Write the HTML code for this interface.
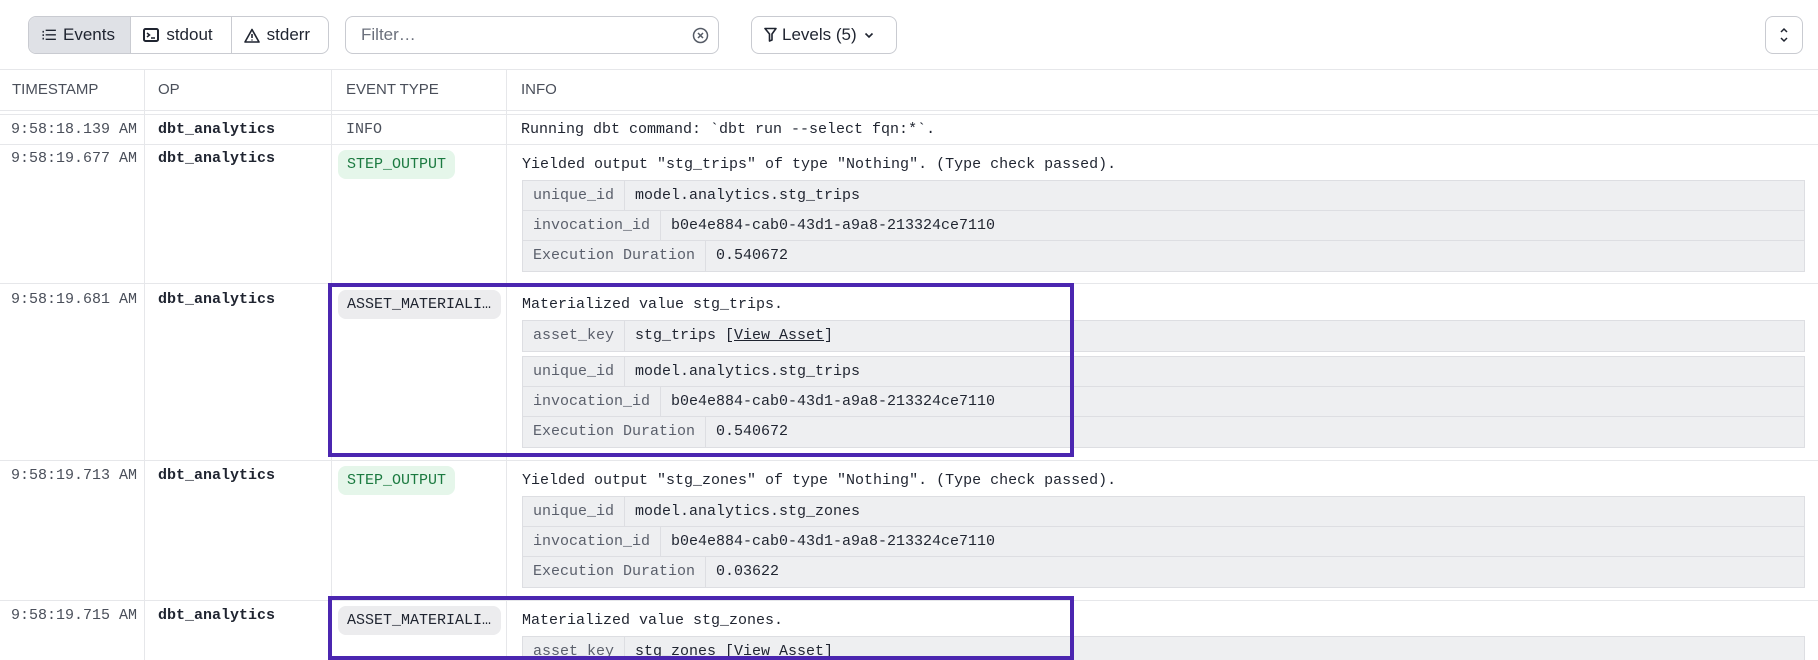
<!DOCTYPE html>
<html style="overflow:hidden;height:660px"><head><meta charset="utf-8"><style>
*{box-sizing:border-box;margin:0;padding:0}
body{width:1818px;height:660px;overflow:hidden;background:#fff;font-family:"Liberation Sans",sans-serif;color:#1f2430;position:relative}
.a{position:absolute}
.mono{font-family:"Liberation Mono",monospace;font-size:15px;white-space:nowrap}
.hl{height:1px;background:#e6e7ea;left:0;width:1818px}
.vl{width:1px;background:#e6e7ea}
.grp{left:28px;top:16px;width:301px;height:38px;border:1px solid #c9cbd1;border-radius:8px;overflow:hidden;display:flex;font-size:17px}
.grp div{display:flex;align-items:center;gap:7px;padding-left:12px;border-right:1px solid #c9cbd1;height:100%}
.pill{height:29px;border-radius:8px;padding:0 9px;line-height:29px}
.tbl{left:522px;width:1283px;background:#eeeff1;border:1px solid #dddee2}
.tr{height:30px;border-bottom:1px solid #dddee2;position:relative;line-height:29px}
.tr:last-child{border-bottom:none}
.k{position:absolute;left:0;top:0;height:100%;padding-left:10px;border-right:1px solid #dddee2;color:#5a5f6b}
.v{position:absolute;top:0}
.box{border:4px solid #4b26b0}
.ts{color:#4a4f5a}
.op{font-weight:bold}
.hd{top:81px;font-size:15px;color:#4a4f5a}
</style></head><body>
<div class="a grp">
<div style="width:103px;background:#dfe1e6"><span style="font-size:14px;letter-spacing:-1px">⁝☰</span>Events</div>
<div style="width:101px"><svg width="16" height="14" viewBox="0 0 16 14"><rect x="1" y="1" width="14" height="12" rx="1.5" fill="none" stroke="#1f2430" stroke-width="2"/><path d="M4 5l2.5 2L4 9M8 10h4" stroke="#1f2430" stroke-width="1.5" fill="none"/></svg>stdout</div>
<div style="width:97px;border-right:none"><svg width="16" height="15" viewBox="0 0 16 15"><path d="M8 1.5L15 14H1Z" fill="none" stroke="#1f2430" stroke-width="1.6" stroke-linejoin="round"/><path d="M8 6v4M8 11.5v1" stroke="#1f2430" stroke-width="1.6"/></svg>stderr</div>
</div>
<div class="a" style="left:345px;top:16px;width:374px;height:38px;border:1px solid #c9cbd1;border-radius:8px;font-size:17px;color:#6b707c;line-height:36px;padding-left:15px">Filter…
<svg class="a" style="right:9px;top:10px" width="17" height="17" viewBox="0 0 17 17"><circle cx="8.5" cy="8.5" r="7" fill="none" stroke="#555b66" stroke-width="1.5"/><path d="M6 6l5 5M11 6l-5 5" stroke="#555b66" stroke-width="1.5"/></svg></div>
<div class="a" style="left:751px;top:16px;width:146px;height:38px;border:1px solid #c9cbd1;border-radius:8px;font-size:17px;line-height:36px;padding-left:12px">
<svg style="vertical-align:-2px;margin-right:5px" width="13" height="15" viewBox="0 0 13 15"><path d="M1 1.5h11L8 7v6L5.5 14V7Z" fill="none" stroke="#1f2430" stroke-width="1.6" stroke-linejoin="round"/></svg>Levels (5) <svg style="vertical-align:1px;margin-left:3px" width="10" height="7" viewBox="0 0 10 7"><path d="M1.5 1.5L5 5l3.5-3.5" fill="none" stroke="#1f2430" stroke-width="1.6"/></svg></div>
<div class="a" style="left:1765px;top:16px;width:38px;height:38px;border:1px solid #c9cbd1;border-radius:8px">
<svg class="a" style="left:13px;top:10px" width="10" height="16" viewBox="0 0 10 16"><path d="M2 5l3-3 3 3M2 11l3 3 3-3" fill="none" stroke="#1f2430" stroke-width="1.5"/></svg></div>

<div class="a hl" style="top:69px"></div>
<div class="a hl" style="top:110px"></div>
<div class="a hl" style="top:114px"></div>
<div class="a hd" style="left:12px">TIMESTAMP</div>
<div class="a hd" style="left:158px">OP</div>
<div class="a hd" style="left:346px">EVENT TYPE</div>
<div class="a hd" style="left:521px">INFO</div>
<div class="a vl" style="left:144px;top:69px;height:591px"></div>
<div class="a vl" style="left:331px;top:69px;height:591px"></div>
<div class="a vl" style="left:506px;top:69px;height:591px"></div>

<div class="a hl" style="top:144px"></div>
<div class="a hl" style="top:283px"></div>
<div class="a hl" style="top:460px"></div>
<div class="a hl" style="top:600px"></div>

<div class="a mono ts" style="left:11px;top:121px">9:58:18.139 AM</div>
<div class="a mono op" style="left:158px;top:121px">dbt_analytics</div>
<div class="a mono ts" style="left:346px;top:121px">INFO</div>
<div class="a mono" style="left:521px;top:121px">Running dbt command: `dbt run --select fqn:*`.</div>

<div class="a mono ts" style="left:11px;top:150px">9:58:19.677 AM</div>
<div class="a mono op" style="left:158px;top:150px">dbt_analytics</div>
<div class="a mono pill" style="left:338px;top:150px;background:#e5f6ea;color:#1b7a40">STEP_OUTPUT</div>
<div class="a mono" style="left:522px;top:156px">Yielded output "stg_trips" of type "Nothing". (Type check passed).</div>
<div class="a tbl mono" style="top:180px">
<div class="tr"><div class="k" style="width:102px">unique_id</div><div class="v" style="left:112px">model.analytics.stg_trips</div></div>
<div class="tr"><div class="k" style="width:138px">invocation_id</div><div class="v" style="left:148px">b0e4e884-cab0-43d1-a9a8-213324ce7110</div></div>
<div class="tr"><div class="k" style="width:183px">Execution Duration</div><div class="v" style="left:193px">0.540672</div></div>
</div>

<div class="a mono ts" style="left:11px;top:291px">9:58:19.681 AM</div>
<div class="a mono op" style="left:158px;top:291px">dbt_analytics</div>
<div class="a mono pill" style="left:338px;top:290px;background:#ececee;width:163px">ASSET_MATERIALI…</div>
<div class="a mono" style="left:522px;top:296px">Materialized value stg_trips.</div>
<div class="a tbl mono" style="top:320px">
<div class="tr"><div class="k" style="width:102px">asset_key</div><div class="v" style="left:112px">stg_trips [<u>View Asset</u>]</div></div>
</div>
<div class="a tbl mono" style="top:356px">
<div class="tr"><div class="k" style="width:102px">unique_id</div><div class="v" style="left:112px">model.analytics.stg_trips</div></div>
<div class="tr"><div class="k" style="width:138px">invocation_id</div><div class="v" style="left:148px">b0e4e884-cab0-43d1-a9a8-213324ce7110</div></div>
<div class="tr"><div class="k" style="width:183px">Execution Duration</div><div class="v" style="left:193px">0.540672</div></div>
</div>
<div class="a box" style="left:328px;top:283px;width:746px;height:174px"></div>

<div class="a mono ts" style="left:11px;top:467px">9:58:19.713 AM</div>
<div class="a mono op" style="left:158px;top:467px">dbt_analytics</div>
<div class="a mono pill" style="left:338px;top:466px;background:#e5f6ea;color:#1b7a40">STEP_OUTPUT</div>
<div class="a mono" style="left:522px;top:472px">Yielded output "stg_zones" of type "Nothing". (Type check passed).</div>
<div class="a tbl mono" style="top:496px">
<div class="tr"><div class="k" style="width:102px">unique_id</div><div class="v" style="left:112px">model.analytics.stg_zones</div></div>
<div class="tr"><div class="k" style="width:138px">invocation_id</div><div class="v" style="left:148px">b0e4e884-cab0-43d1-a9a8-213324ce7110</div></div>
<div class="tr"><div class="k" style="width:183px">Execution Duration</div><div class="v" style="left:193px">0.03622</div></div>
</div>

<div class="a mono ts" style="left:11px;top:607px">9:58:19.715 AM</div>
<div class="a mono op" style="left:158px;top:607px">dbt_analytics</div>
<div class="a mono pill" style="left:338px;top:606px;background:#ececee;width:163px">ASSET_MATERIALI…</div>
<div class="a mono" style="left:522px;top:612px">Materialized value stg_zones.</div>
<div class="a tbl mono" style="top:636px;height:24px;overflow:hidden;border-bottom:none">
<div class="tr"><div class="k" style="width:102px">asset_key</div><div class="v" style="left:112px">stg_zones [<u>View Asset</u>]</div></div>
</div>
<div class="a box" style="left:328px;top:596px;width:746px;height:64px"></div>
</body></html>
